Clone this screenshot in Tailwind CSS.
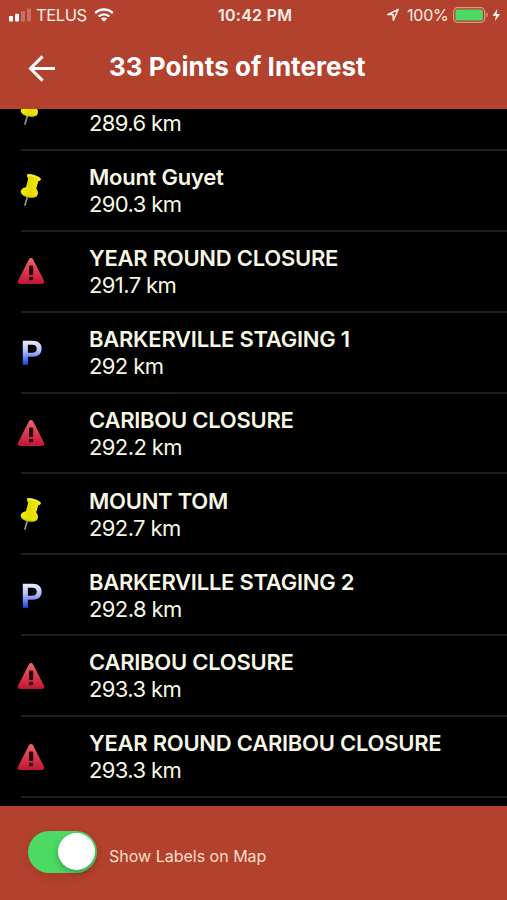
<!DOCTYPE html>
<html lang="en">
<head>
    <meta charset="UTF-8">
    <meta name="viewport" content="width=device-width, initial-scale=1.0">
    <title>Points of Interest</title>
    <script src="https://cdn.jsdelivr.net/npm/@tailwindcss/browser@4"></script>
</head>
<body class="bg-black h-screen flex flex-col overflow-hidden font-['Inter','Liberation_Sans',sans-serif]">
    <svg class="absolute w-0 h-0">
        <defs>
            <linearGradient id="pin-fill" x1="0" y1="0" x2="1" y2="0">
                <stop offset="0" stop-color="#f2ee00"/>
                <stop offset=".45" stop-color="#e4dc00"/>
                <stop offset="1" stop-color="#f6ee10"/>
            </linearGradient>
            <linearGradient id="warn-fill" gradientUnits="userSpaceOnUse" x1="0" y1="6" x2="0" y2="33">
                <stop offset="0" stop-color="#ee6a70"/>
                <stop offset=".5" stop-color="#d93a50"/>
                <stop offset="1" stop-color="#c01432"/>
            </linearGradient>
            <linearGradient id="park-fill" gradientUnits="userSpaceOnUse" x1="0" y1="8" x2="0" y2="32">
                <stop offset="0" stop-color="#eef0fb"/>
                <stop offset=".45" stop-color="#b4c0f8"/>
                <stop offset="1" stop-color="#2347f2"/>
            </linearGradient>
        </defs>
        <symbol id="pin" viewBox="0 0 40 40">
            <path d="M15.6 26 L13 35" stroke="#8d8d8d" stroke-width="1.8" stroke-linecap="round"/>
            <path d="M15.2 4.2 C19 3.6 26 5.7 29 8.7 C29 10.4 27.8 11 26.4 11 L24.2 18.6 C26 20.6 26.6 23.4 25.2 25.8 C22.5 29.2 10.5 27.4 8.8 22.2 C8.4 19.6 11 17.6 14 17.2 L16.2 8.6 C15 7 14.5 5.6 15.2 4.2 Z" fill="url(#pin-fill)"/>
            <path d="M9 23 C12 25.8 19 27.2 25 26 C22.5 29 10.8 27.6 9 23 Z" fill="#d2ca00"/>
            <path d="M16 5.2 C20 5.2 25 6.9 28 9" stroke="#fff860" stroke-width="1" fill="none"/>
        </symbol>
        <symbol id="warn" viewBox="0 0 40 40">
            <path d="M19 9 L8 30.4 H30 Z" transform="translate(0 .3)" fill="url(#warn-fill)" stroke="url(#warn-fill)" stroke-width="4.6" stroke-linejoin="round"/>
            <rect x="17" y="14.6" width="4.2" height="9.4" rx="1" fill="#25060b"/>
            <rect x="17" y="25.8" width="4.2" height="3.4" rx="1" fill="#25060b"/>
        </symbol>
        <symbol id="park" viewBox="0 0 40 40">
            <path fill-rule="evenodd" fill="url(#park-fill)" d="M10.8 8.8 H20.6 C26.6 8.8 29.6 11.8 29.6 16.8 C29.6 21.8 26.4 24.8 20.6 24.8 H15.9 V32.8 H10.8 Z M15.9 12.8 V20.8 H20 C23.2 20.8 24.7 19.6 24.7 16.8 C24.7 14 23.2 12.8 20 12.8 Z"/>
        </symbol>
    </svg>

    <header class="relative z-10 h-[109px] shrink-0 bg-[#b2412e] text-white">
        <div class="h-[30px] flex items-center text-[#fff0e8]">
            <svg class="ml-2 w-6 h-[14px]" viewBox="0 0 24 14">
                <rect x="1" y="8" width="4" height="5.5" rx="1" fill="#fff"/>
                <rect x="7" y="5.7" width="4" height="7.8" rx="1" fill="#fff"/>
                <rect x="13" y="3" width="4" height="10.5" rx="1" fill="#c76f60"/>
                <rect x="19" y="0.4" width="4" height="13.1" rx="1" fill="#c76f60"/>
            </svg>
            <span class="ml-1 w-[58px] whitespace-nowrap text-[16.5px] tracking-[-0.4px]">TELUS</span>
            <svg class="w-5 h-[14px]" viewBox="0 0 20 14" fill="none" stroke="#fff">
                <path d="M1.2 5 C6 .3 14 .3 18.8 5" stroke-width="2.5"/>
                <path d="M4.6 8.5 C7.6 5.6 12.4 5.6 15.4 8.5" stroke-width="2.4"/>
                <path d="M10 13.6 L6.8 10.5 C8.6 9 11.4 9 13.2 10.5 Z" fill="#fff" stroke="none"/>
            </svg>
            <span class="ml-[104px] w-[75px] whitespace-nowrap text-[16px] font-semibold tracking-[0.25px]">10:42 PM</span>
            <svg class="ml-[93px] w-[14px] h-[14px]" viewBox="0 0 14 14" fill="none" stroke="#fff0e8" stroke-width="1.5" stroke-linejoin="round">
                <path d="M12.2 1.5 L1.6 6.6 H7 L7.4 12.2 Z"/>
            </svg>
            <span class="ml-[7px] w-[42px] whitespace-nowrap text-[16px] tracking-[-0.2px]">100%</span>
            <svg class="ml-1 w-[48px] h-4" viewBox="0 0 48 16">
                <rect x=".7" y=".7" width="31" height="14.6" rx="3.8" fill="none" stroke="#d99a88" stroke-width="1.2"/>
                <rect x="2.5" y="2.5" width="27.4" height="11" rx="1.5" fill="#4cd964"/>
                <path d="M33.4 5.6 C35.4 6.2 35.4 9.8 33.4 10.4 Z" fill="#d99a88"/>
                <path d="M44.5 1.8 L39.6 8.8 H43 L41.8 14.2 L47 7 H43.5 Z" fill="#fff"/>
            </svg>
        </div>
        <div class="h-[74px] flex items-center">
            <svg class="ml-7 mt-[2px] w-7 h-7" viewBox="0 0 28 28" fill="none" stroke="#fff" stroke-width="3">
                <path d="M27 14.5 H2.5 M14.6 2.4 L2.5 14.5 L14.6 26.6"/>
            </svg>
            <h1 class="ml-[53px] -mt-[2px] whitespace-nowrap text-[26px] font-bold tracking-[0.04px]">33 Points of Interest</h1>
        </div>
    </header>

    <main class="flex-1 overflow-hidden">
        <ul id="poi-list" class="-mt-[39px] text-[22px] leading-[27px] text-[#f7f7e4]"></ul>
    </main>

    <footer class="h-[94.5px] shrink-0 bg-[#b2412e] flex items-center">
        <div class="ml-7 -mt-[2px] w-[69px] h-[42px] rounded-full bg-[#4cd964] flex items-center justify-end pr-[2px] shadow-[0_3px_8px_rgba(90,20,10,0.12)]">
            <div class="w-[37px] h-[37px] rounded-full bg-white shadow-[0_3px_6px_rgba(0,0,0,0.25)]"></div>
        </div>
        <span class="ml-3 mt-[7px] whitespace-nowrap text-[16px] text-[#ffdfc8]">Show Labels on Map</span>
    </footer>

    <script>
        const points = [
            ['pin', '&nbsp;', '289.6 km'],
            ['pin', 'Mount Guyet', '290.3 km'],
            ['warn', 'YEAR ROUND CLOSURE', '291.7 km'],
            ['park', 'BARKERVILLE STAGING 1', '292 km'],
            ['warn', 'CARIBOU CLOSURE', '292.2 km'],
            ['pin', 'MOUNT TOM', '292.7 km'],
            ['park', 'BARKERVILLE STAGING 2', '292.8 km'],
            ['warn', 'CARIBOU CLOSURE', '293.3 km'],
            ['warn', 'YEAR ROUND CARIBOU CLOSURE', '293.3 km']
        ];

        document.getElementById('poi-list').innerHTML = points.map(([icon, name, distance]) => `
            <li class="ml-[21px] h-[80.9px] flex items-center border-b-2 border-[#1e1e1e]">
                <svg class="-ml-[9px] w-10 h-10 shrink-0"><use href="#${icon}"/></svg>
                <div class="ml-[37px] mt-[1.5px] whitespace-nowrap">
                    <p class="font-semibold tracking-[-0.25px]">${name}</p>
                    <p class="tracking-[-0.6px]">${distance}</p>
                </div>
            </li>`).join('');
    </script>
</body>
</html>
